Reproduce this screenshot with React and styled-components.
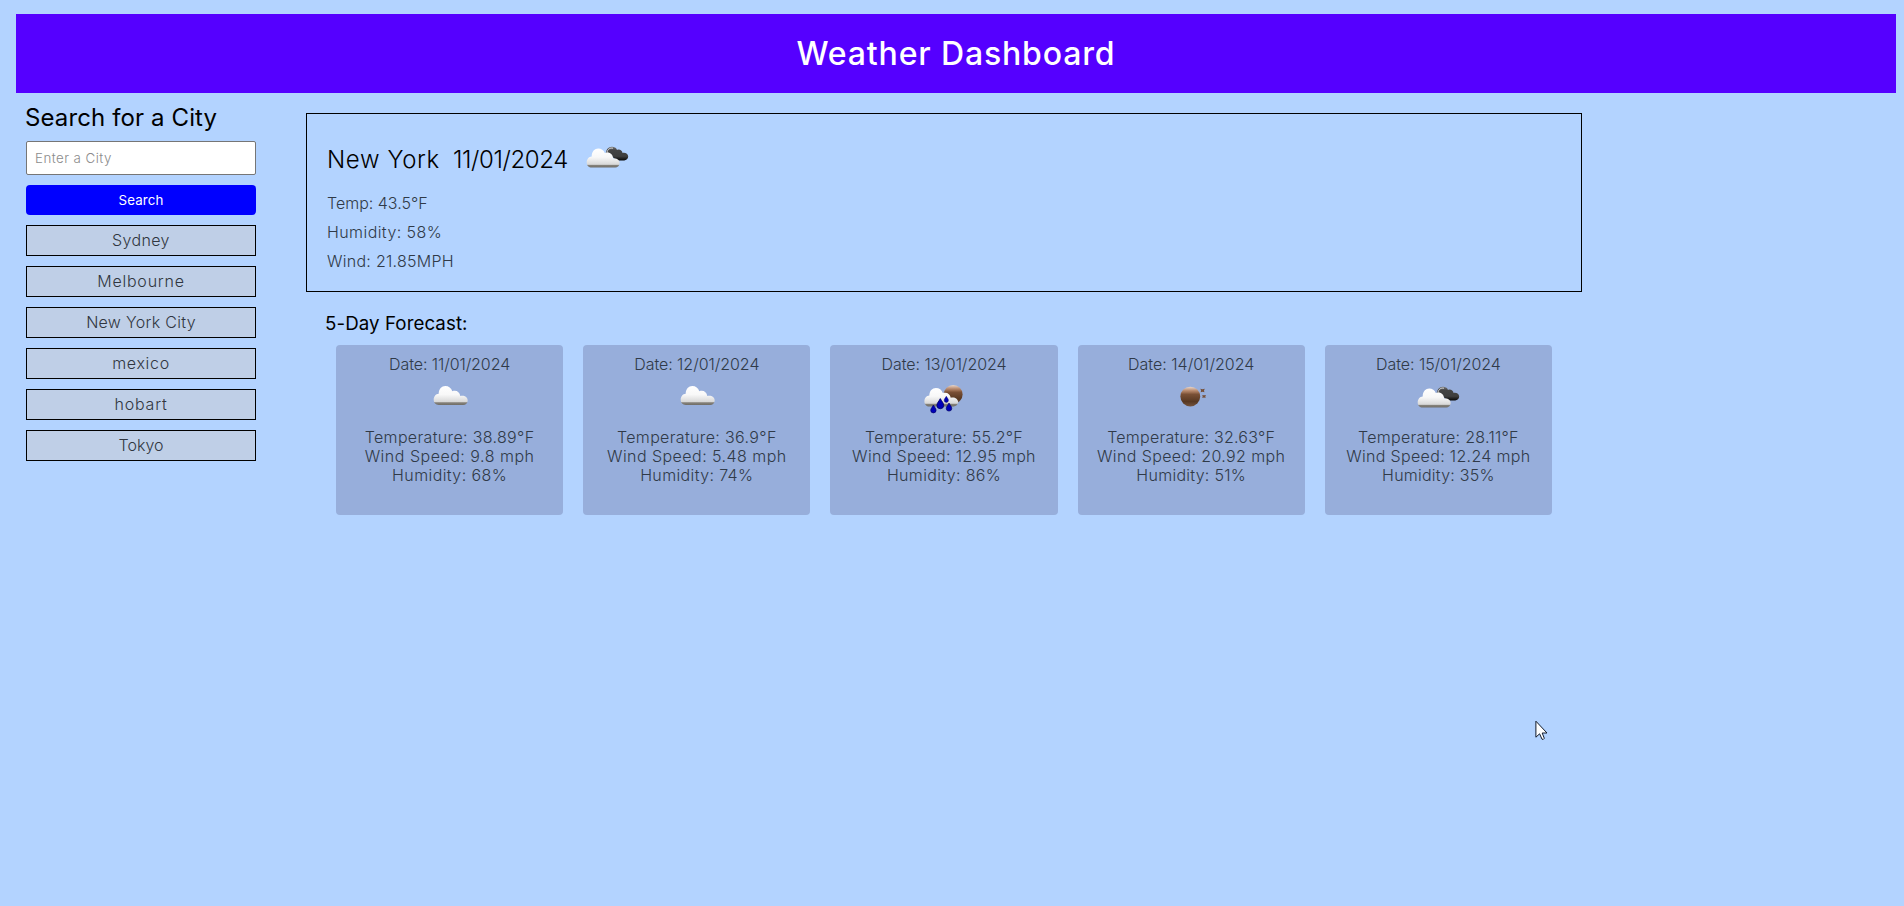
import React from 'react';
import styled, { createGlobalStyle } from 'styled-components';

const GlobalStyle = createGlobalStyle`
  * { box-sizing: border-box; }
  body {
    margin: 0;
    min-height: 100vh;
    background: #b3d3ff;
    color: #000;
    font-family: Inter, "Liberation Sans", sans-serif;
    font-weight: 300;
    font-size: 16px;
    line-height: 19px;
  }
  h1, h2, h3, p { margin: 0; }
`;

const Page = styled.div`
  padding: 14px 8px 0 16px;
`;

const Header = styled.header`
  display: flex;
  justify-content: center;
  padding: 20px;
  background: #5500ff;
  color: #fff;
`;

const Title = styled.h1`
  font-size: 32px;
  font-weight: 500;
  line-height: 39px;
  letter-spacing: 0.85px;
`;

const Body = styled.div`
  display: flex;
  align-items: flex-start;
`;

const Sidebar = styled.aside`
  display: flex;
  flex-direction: column;
  gap: 10px;
  width: 250px;
  padding: 10px;
`;

const SearchTitle = styled.h2`
  margin: 0 0 -1px -1px;
  font-size: 24px;
  font-weight: 400;
  line-height: 29px;
  letter-spacing: 0.12px;
`;

const CityInput = styled.input`
  height: 34px;
  padding: 0 8px;
  border: 1px solid #767676;
  border-radius: 2px;
  background: #fff;
  font: 300 13.33px Inter, "Liberation Sans", sans-serif;
  letter-spacing: 0.45px;
  &::placeholder { color: #8b8b8b; }
`;

const SearchButton = styled.button`
  height: 30px;
  padding: 0;
  border: 0;
  border-radius: 4px;
  background: #0000ff;
  color: #fff;
  font: 400 13.33px Inter, "Liberation Sans", sans-serif;
  letter-spacing: 0.13px;
`;

const CityItem = styled.div`
  height: 31px;
  padding: 5px 0;
  border: 1px solid #000;
  background: #bfcfe7;
  color: #303640;
  text-align: center;
  letter-spacing: ${(p) => p.$spacing}px;
`;

const Main = styled.main`
  width: 1276px;
  margin: 20px 0 0 40px;
`;

const Current = styled.section`
  display: flex;
  flex-direction: column;
  gap: 10px;
  padding: 20px;
  border: 1px solid #000;
`;

const CurrentHeading = styled.div`
  display: flex;
  align-items: center;
  height: 50px;
  font-size: 24px;
  line-height: 29px;
`;

const CityName = styled.span`
  width: 126px;
  letter-spacing: 0.6px;
  white-space: nowrap;
`;

const CurrentDate = styled.span`
  width: 129px;
  letter-spacing: -0.4px;
`;

const Reading = styled.p`
  color: #303a48;
  white-space: nowrap;
  letter-spacing: ${(p) => p.$spacing}px;
`;

const ForecastTitle = styled.h3`
  margin: 20px 0 10px 19px;
  font-size: 18.72px;
  font-weight: 400;
  line-height: 23px;
  letter-spacing: 0.08px;
`;

const ForecastGrid = styled.section`
  display: grid;
  grid-template-columns: repeat(5, 1fr);
  gap: 20px;
  padding: 0 30px;
`;

const Card = styled.article`
  display: flex;
  flex-direction: column;
  align-items: center;
  height: 170px;
  padding: 10px;
  border-radius: 4px;
  background: #97aedb;
`;

const Icon = styled.svg`
  display: block;
  flex: none;
  width: 50px;
  height: 50px;
`;

const CardIcon = styled.div`
  height: 54px;
`;

const GradientDefs = styled.svg`
  position: absolute;
  width: 0;
  height: 0;
`;

const Pointer = styled.svg`
  position: absolute;
  left: 1535px;
  top: 720px;
  width: 14px;
  height: 22px;
`;

const CLOUD = 'M5 19 C2 19 0 16.6 0 13.8 C0 10.4 2.2 8 5 7.8 C5 3 8 0 11.6 0 C15 0 17.6 2 18.6 5.2 C22.6 3.8 26 6 26.6 10 C30.4 9 34 11 34 14.4 C34 17 32 19 29.5 19 Z';

function Gradients() {
  return (
    <GradientDefs aria-hidden="true">
      <defs>
        <linearGradient id="cloud" x1="0" y1="0" x2="0" y2="1">
          <stop offset="0" stopColor="#fff" />
          <stop offset="0.45" stopColor="#f8f8f8" />
          <stop offset="0.83" stopColor="#d8d8d8" />
          <stop offset="0.88" stopColor="#85827b" />
          <stop offset="1" stopColor="#706d66" />
        </linearGradient>
        <linearGradient id="dark" x1="0" y1="0" x2="0" y2="1">
          <stop offset="0" stopColor="#777" />
          <stop offset="0.25" stopColor="#444" />
          <stop offset="0.7" stopColor="#3e3e3e" />
          <stop offset="1" stopColor="#080808" />
        </linearGradient>
        <linearGradient id="orb" x1="0" y1="0" x2="0" y2="1">
          <stop offset="0" stopColor="#ead8cc" />
          <stop offset="0.2" stopColor="#b88a6e" />
          <stop offset="0.32" stopColor="#93664a" />
          <stop offset="0.38" stopColor="#7a5036" />
          <stop offset="0.75" stopColor="#573822" />
          <stop offset="1" stopColor="#74543e" />
        </linearGradient>
      </defs>
    </GradientDefs>
  );
}

function Drop({ x, y, s }) {
  return <path transform={`translate(${x} ${y}) scale(${s})`} fill="#0000b8" stroke="#000064" strokeWidth="0.7" d="M0 -4 C1 -2 3 0 3 1.8 A3 3 0 0 1 -3 1.8 C-3 0 -1 -2 0 -4 Z" />;
}

function WeatherIcon({ kind }) {
  return (
    <Icon viewBox="0 0 50 50">
      {kind === 'cloud' && <path d={CLOUD} transform="translate(8.7 12)" fill="url(#cloud)" />}
      {kind === 'broken' && (
        <>
          <path d="M24 20 C23.5 15.5 27 12.2 30.5 12.8 C33 13 34.5 14.5 35 16 C37.5 14.8 40 16.4 40.6 19 C43.4 18.4 46.2 20 46.2 22.6 C46.2 25 44.3 26.4 42.2 26.4 H35 L28 21 Z" fill="url(#dark)" />
          <path d="M25 19 C25.2 15.5 27.8 13.6 31 14.2" fill="none" stroke="#e5e5e5" strokeWidth="0.9" />
          <path d="M5 19 C2 19 0 16.6 0 13.8 C0 10.4 2.2 8 5 7.8 C5 3 8 0 11.6 0 C14.6 0 17 1.6 18.1 4.4 C22.4 2.6 26.4 5.4 26.4 10 C30 9.4 33 11.3 33 14.4 C33 17 31 19 28.5 19 Z" transform="translate(4.7 14.6)" fill="url(#cloud)" />
        </>
      )}
      {kind === 'rain' && (
        <>
          <circle cx="34.2" cy="20.4" r="9.4" fill="url(#orb)" />
          <path d={CLOUD} transform="translate(5.4 14) scale(.99 .97)" fill="url(#cloud)" />
          <Drop x={14.4} y={34.6} s={0.9} />
          <Drop x={21.3} y={29.2} s={1.15} />
          <Drop x={27.3} y={25.1} s={0.7} />
          <Drop x={30} y={32.7} s={0.92} />
        </>
      )}
      {kind === 'night' && (
        <>
          <circle cx="24.3" cy="22.6" r="9.9" fill="url(#orb)" />
          <path d="M34.3 14.7 L36.4 15.2 L38.8 14.7 L38 16.5 L38.4 18.3 L36.5 17.7 L34.7 18.3 L35.1 16.4 Z M36.2 20.9 L38 21.3 L39.9 20.9 L39.3 22.4 L39.6 24.1 L38 23.5 L36.3 24.1 L36.7 22.3 Z" fill="#75503a" />
        </>
      )}
    </Icon>
  );
}

const cities = [
  ['Sydney', 0.36],
  ['Melbourne', 0.78],
  ['New York City', 0.3],
  ['mexico', 0.69],
  ['hobart', 0.8],
  ['Tokyo', 0],
];

const current = [
  ['Temp: 43.5°F', 0],
  ['Humidity: 58%', 0.42],
  ['Wind: 21.85MPH', 0.27],
];

const forecast = [
  { icon: 'cloud', date: ['Date: 11/01/2024', -0.09], rows: [['Temperature: 38.89°F', 0.34], ['Wind Speed: 9.8 mph', 0.5], ['Humidity: 68%', 0.4]] },
  { icon: 'cloud', date: ['Date: 12/01/2024', -0.05], rows: [['Temperature: 36.9°F', 0.35], ['Wind Speed: 5.48 mph', 0.45], ['Humidity: 74%', 0.37]] },
  { icon: 'rain', date: ['Date: 13/01/2024', -0.05], rows: [['Temperature: 55.2°F', 0.25], ['Wind Speed: 12.95 mph', 0.33], ['Humidity: 86%', 0.34]] },
  { icon: 'night', date: ['Date: 14/01/2024', 0], rows: [['Temperature: 32.63°F', 0.25], ['Wind Speed: 20.92 mph', 0.38], ['Humidity: 51%', 0.27]] },
  { icon: 'broken', date: ['Date: 15/01/2024', -0.05], rows: [['Temperature: 28.11°F', 0.28], ['Wind Speed: 12.24 mph', 0.33], ['Humidity: 35%', 0.24]] },
];

export default function App() {
  return (
    <Page>
      <GlobalStyle />
      <Gradients />
      <Header>
        <Title>Weather Dashboard</Title>
      </Header>
      <Body>
        <Sidebar>
          <SearchTitle>Search for a City</SearchTitle>
          <CityInput placeholder="Enter a City" />
          <SearchButton>Search</SearchButton>
          {cities.map(([name, spacing]) => (
            <CityItem key={name} $spacing={spacing}>{name}</CityItem>
          ))}
        </Sidebar>
        <Main>
          <Current>
            <CurrentHeading>
              <CityName>New York</CityName>
              <CurrentDate>11/01/2024</CurrentDate>
              <WeatherIcon kind="broken" />
            </CurrentHeading>
            {current.map(([text, spacing]) => (
              <Reading key={text} $spacing={spacing}>{text}</Reading>
            ))}
          </Current>
          <ForecastTitle>5-Day Forecast:</ForecastTitle>
          <ForecastGrid>
            {forecast.map(({ icon, date, rows }) => (
              <Card key={date[0]}>
                <Reading $spacing={date[1]}>{date[0]}</Reading>
                <CardIcon><WeatherIcon kind={icon} /></CardIcon>
                {rows.map(([text, spacing]) => (
                  <Reading key={text} $spacing={spacing}>{text}</Reading>
                ))}
              </Card>
            ))}
          </ForecastGrid>
        </Main>
      </Body>
      <Pointer viewBox="0 0 14 22">
        <path d="M0.9 1.2 V17.2 L4.6 13.8 L7 19.2 Q8.3 20 9.3 18.3 L7.2 13 H12 Z" fill="#fff" stroke="#111a2a" strokeWidth="1" />
      </Pointer>
    </Page>
  );
}
